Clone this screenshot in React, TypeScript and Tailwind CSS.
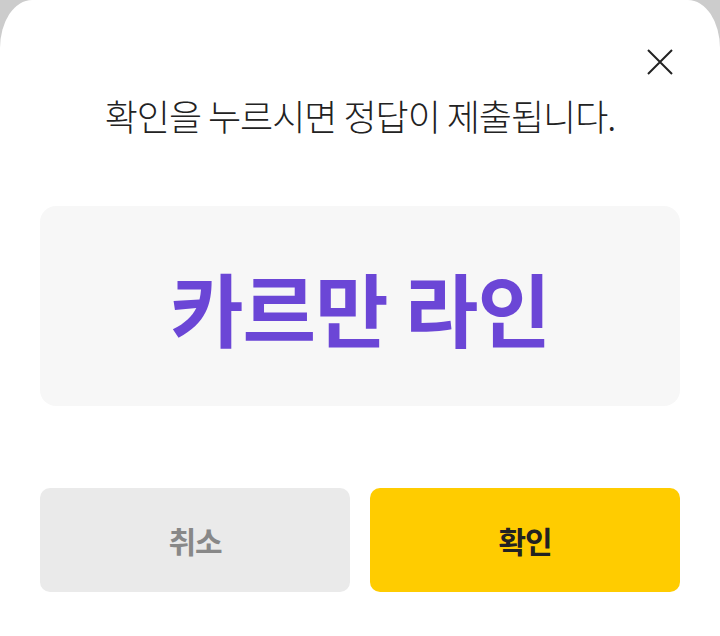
export default function App() {
  return (
    <div className="w-[720px] h-[636px] bg-[#cccccc] overflow-hidden" style={{ fontFamily: '"Noto Sans CJK KR", "Noto Sans", sans-serif' }}>
      <div className="h-full bg-white rounded-tl-[32px_48px] rounded-tr-[32px_48px] flex flex-col px-10">
        <div className="flex justify-end pt-[49px] pr-[7px]">
          <svg width="26" height="26" viewBox="0 0 26 26" fill="none" stroke="#222" strokeWidth="2">
            <path d="M1 1L25 25M25 1L1 25" />
          </svg>
        </div>
        <p className="mt-[18px] text-center text-[36px] leading-[44px] font-light text-[#222] tracking-[-1px]">확인을 누르시면 정답이 제출됩니다.</p>
        <div className="mt-[69px] h-[200px] rounded-[16px] bg-[#f7f7f7] flex items-center justify-center">
          <span className="text-[80px] font-bold text-[#6b46d6] tracking-[-1px]">카르만 라인</span>
        </div>
        <div className="mt-[82px] flex gap-5">
          <button className="flex-1 h-[104px] rounded-[10px] bg-[#eaeaea] text-[30px] font-bold text-[#888] tracking-[-1px]">취소</button>
          <button className="flex-1 h-[104px] rounded-[10px] bg-[#ffcc00] text-[30px] font-bold text-[#222] tracking-[-1px]">확인</button>
        </div>
      </div>
    </div>
  );
}
